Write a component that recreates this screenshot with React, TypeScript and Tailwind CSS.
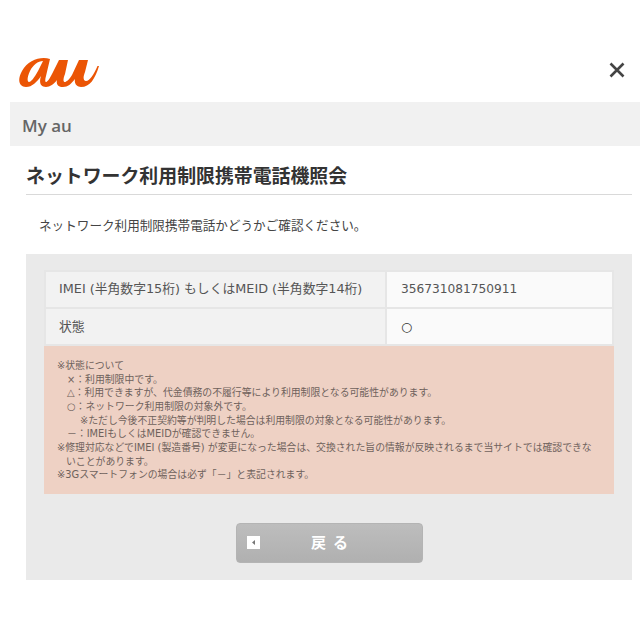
const AuLogo = () => (
  <svg width="80" height="31" viewBox="0 0 80 31" className="block">
    <path
      fill="#EB5505"
      fillRule="evenodd"
      d="M31 2 C22 -1 9 3 3 14 C-2 23 0 30 7 30 C13 30 18 25 22 19 C20 25 21 30 27 30 C31 30 35 27 38 23 C37 27 39 30 44 30 C49 30 52 27 56 22 C55 27 58 30 62 30 C71 30 76 22 80 9 L78.5 9 C75 17 71 24 67 24 C64 24 64 20 66 15 L69 3 L60 3 L53 18 C50 23 47 25 46 25 C44 25 44 22 46 17 L49 3 L40 3 L33 17 C30 23 28 25 27 25 C26 25 26 22 27 19 Z M24 4 L19 14 C15 21 12 25 10 25 C8 25 8 20 11 14 C14 8 19 4 24 4 Z"
    />
  </svg>
);

export default function App() {
  return (
    <div className="w-[640px] h-[640px] bg-white pt-[55px] font-['DejaVu_Sans','Noto_Sans_CJK_JP',sans-serif] overflow-hidden">
      <div className="flex justify-between items-start h-[47px] pt-[2px] pl-[19px] pr-[15px]">
        <AuLogo />
        <svg width="16" height="16" viewBox="0 0 16 16" className="mt-[5px]">
          <path d="M1.5 1.5 L14.5 14.5 M14.5 1.5 L1.5 14.5" stroke="#444" strokeWidth="2.6" fill="none" />
        </svg>
      </div>
      <div className="ml-[10px] h-[44px] bg-[#f1f1f1] flex items-center pl-[12px] pt-[3px]">
        <span className="text-[17px] font-semibold text-[#666] font-['Open_Sans',sans-serif]">My au</span>
      </div>
      <div className="ml-[26px] mr-[8px]">
        <h1 className="h-[49px] pt-[17px] text-[18.9px] leading-[26px] font-bold text-[#333] border-b border-[#d9d9d9]">
          ネットワーク利用制限携帯電話機照会
        </h1>
        <p className="pl-[13px] pt-[21px] h-[59px] text-[12.6px] leading-[20px] text-[#444]">
          ネットワーク利用制限携帯電話かどうかご確認ください。
        </p>
        <div className="h-[326px] bg-[#eaeaea] pt-[16px] px-[18px]">
          <table className="w-[570px] table-fixed border-collapse text-[12.8px] text-[#555]">
            <tbody>
              <tr className="h-[37px]">
                <td className="w-[341px] bg-[#f2f2f2] border-2 border-[#e6e6e6] pl-[13px] pb-[1px]">
                  IMEI (半角数字15桁) もしくはMEID (半角数字14桁)
                </td>
                <td className="bg-[#fafafa] border-2 border-[#e6e6e6] pl-[14px] pb-[1px] text-[12.2px]">356731081750911</td>
              </tr>
              <tr className="h-[37px]">
                <td className="bg-[#f2f2f2] border-2 border-[#e6e6e6] pl-[13px]">状態</td>
                <td className="bg-[#fafafa] border-2 border-[#e6e6e6] pl-[14px] text-[#333]">○</td>
              </tr>
            </tbody>
          </table>
          <div className="w-[570px] h-[148px] bg-[#eed1c4] pt-[13px] pl-[13px] pr-[18px] text-[9.85px] leading-[13.65px] text-[#6e625c]">
            <p>※状態について</p>
            <p className="pl-[10px]">×：利用制限中です。</p>
            <p className="pl-[10px]">△：利用できますが、代金債務の不履行等により利用制限となる可能性があります。</p>
            <p className="pl-[10px]">○：ネットワーク利用制限の対象外です。</p>
            <p className="pl-[23px]">※ただし今後不正契約等が判明した場合は利用制限の対象となる可能性があります。</p>
            <p className="pl-[10px]">－：IMEIもしくはMEIDが確認できません。</p>
            <p className="pl-[9px] -indent-[9px]">※修理対応などでIMEI (製造番号) が変更になった場合は、交換された旨の情報が反映されるまで当サイトでは確認できないことがあります。</p>
            <p>※3Gスマートフォンの場合は必ず「－」と表記されます。</p>
          </div>
          <div className="flex pt-[29px] pl-[192px]">
            <button className="relative w-[187px] h-[40px] rounded-[4px] bg-gradient-to-b from-[#bdbdbd] to-[#b0b0b0] border border-[#b4b4b4] flex items-center justify-center text-white text-[15px] font-bold tracking-[7px] pl-[7px]">
              <span className="absolute left-[10px] top-[12px] w-[13px] h-[13px] bg-white flex items-center justify-center">
                <svg width="5" height="5" viewBox="0 0 5 5"><path d="M4 0 L1 2.5 L4 5 Z" fill="#777" /></svg>
              </span>
              戻る
            </button>
          </div>
        </div>
      </div>
    </div>
  );
}
